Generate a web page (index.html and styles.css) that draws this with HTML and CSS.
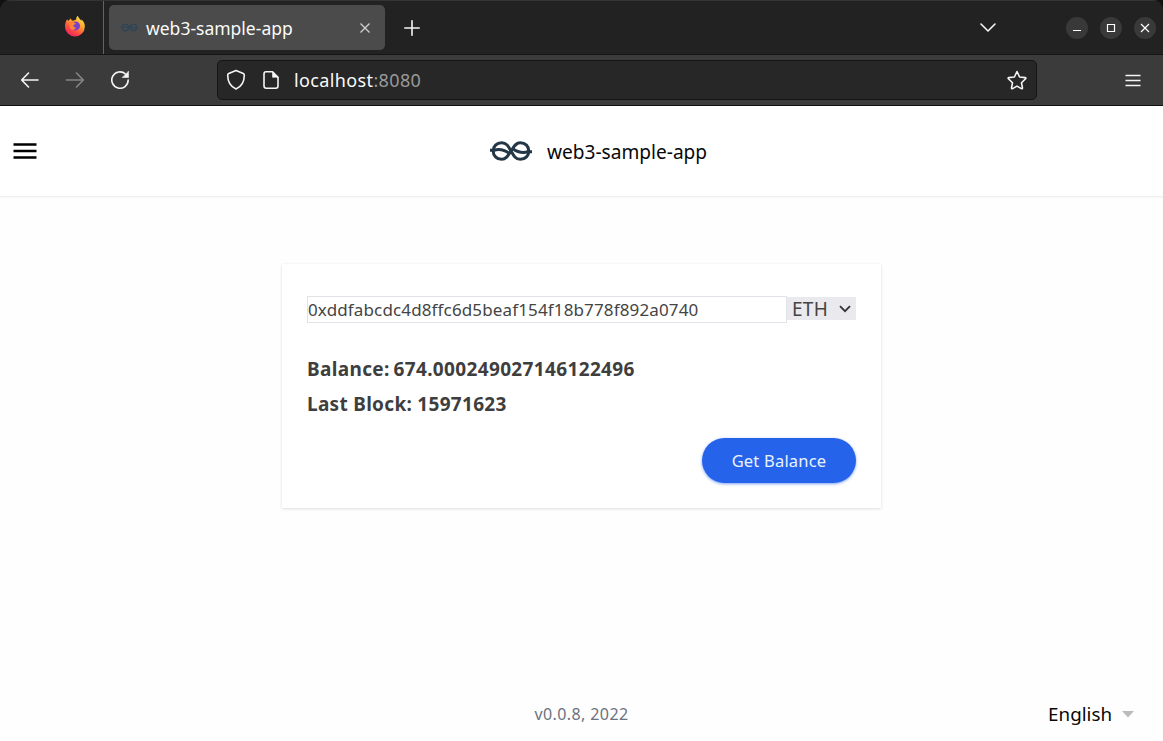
FILE: index.html
```html
<!DOCTYPE html>
<html lang="en">
<head>
<meta charset="utf-8">
<title>web3-sample-app</title>
<link rel="stylesheet" href="styles.css">
</head>
<body>
<svg class="defs" width="0" height="0">
  <symbol id="knot" viewBox="0 0 42 20">
    <g fill="none" stroke="currentColor" stroke-width="3">
      <path d="M21 10C18 14.500 16.500 18.300 11.700 18.300C6.500 18.300 3.200 14.500 3.200 10S6.500 1.700 11.700 1.700C16.500 1.700 18.500 5.500 21 10S25.500 18.300 30.300 18.300C35.500 18.300 38.800 14.500 38.800 10S35.500 1.700 30.300 1.700C25.500 1.700 24 5.500 21 10Z"/>
      <path d="M0 9.300H4C9 7.500 14 8.500 19.500 12.500M22.500 7.500C28 11.500 33 12.500 38 10.700H42"/>
    </g>
  </symbol>
</svg>
<div class="window">
  <div class="chrome">
    <div class="tabbar">
      <div class="pinned">
        <svg width="22" height="22" viewBox="0 0 22 22">
          <defs>
            <linearGradient id="flame" x1="0.85" y1="0" x2="0.25" y2="1"><stop offset="0" stop-color="#fff04a"/><stop offset=".38" stop-color="#ffa42d"/><stop offset=".68" stop-color="#ff5140"/><stop offset="1" stop-color="#ec1a65"/></linearGradient>
          </defs>
          <path fill="url(#flame)" d="M3.300 4.200C3.600 5 4 5.400 4.500 5.800L6.900 3.200C6.900 4.500 7.600 5.200 8.600 5.700C10 5.500 11 5.200 12.200 4.600C12 3 12.800 1.500 13.800.8C14.400 3 16.200 4 17.200 5.800L17.600 4.600C20 7 21 9 20.800 12A9.900 9.700 0 0 1 1 11.700C.9 8.700 1.700 6.200 3.300 4.200Z"/>
          <circle cx="11.500" cy="10.900" r="4.500" fill="#7542c9"/>
          <path fill="#ff8438" d="M4.500 7C7 5.700 9 6 10.200 7.500L11.800 8.200C11.500 9.300 10.500 9.600 9.500 10C9 11.800 10.500 12.800 12 12.800C10.500 15.500 7.500 16 6 12.500Z"/>
        </svg>
      </div>
      <div class="tab">
        <svg class="favicon" width="17" height="9"><use href="#knot"/></svg>
        <span class="tab-title">web3-sample-app</span>
        <svg class="tab-close" width="10" height="10" viewBox="0 0 10 10"><path d="M.5.5l9 9M9.500.5l-9 9"/></svg>
      </div>
      <svg class="icon plus" width="16" height="16" viewBox="0 0 16 16"><path d="M8 .8v14.400M.8 8h14.400"/></svg>
      <svg class="icon tabs-menu" width="16" height="10" viewBox="0 0 16 10"><path d="M1 1l7 7 7-7"/></svg>
      <div class="controls">
        <span class="control"><svg width="22" height="22"><path d="M7 13.500h8"/></svg></span>
        <span class="control"><svg width="22" height="22"><path d="M7.500 7.500h7v7h-7z"/></svg></span>
        <span class="control"><svg width="22" height="22"><path d="M7 7l8 8M15 7l-8 8"/></svg></span>
      </div>
    </div>
    <div class="toolbar">
      <div class="nav">
        <svg class="icon" width="20" height="18" viewBox="0 0 20 18"><path d="M18 9H2M8.500 2L1.700 9L8.500 16"/></svg>
        <svg class="icon disabled" width="20" height="18" viewBox="0 0 20 18"><path d="M1.500 9h16M11.500 2L18.300 9L11.500 16"/></svg>
        <svg class="icon" width="20" height="20" viewBox="0 0 20 20"><path d="M15.500 4A8.200 8.200 0 1 0 18.200 10"/><path class="solid" d="M18.500 1.500v6h-6z"/></svg>
      </div>
      <div class="urlbar">
        <svg class="icon" width="20" height="22" viewBox="0 0 20 22"><path d="M10 1.500L17.300 4.500Q18.300 5 18.300 6.200C18.300 13 15.500 17.500 10 20C4.500 17.500 1.700 13 1.700 6.200Q1.700 5 2.700 4.500Z"/></svg>
        <svg class="icon page" width="16" height="18" viewBox="0 0 16 18"><path d="M3 .8h6.500L15 6.300V15Q15 17.200 12.800 17.200H3.200Q1 17.200 1 15V3Q1 .8 3 .8Z"/><path class="solid" d="M9.500.8V6.300H15z"/></svg>
        <span class="url">localhost<span class="port">:8080</span></span>
        <svg class="icon star" width="22" height="21" viewBox="0 0 22 21"><path d="M11 1.500L13.600 7L19.300 7.600Q20.300 8 19.600 8.800L15.500 12.800L16.500 18Q16.400 19.100 15.400 18.600L11 16.100L6.600 18.600Q5.600 19.100 5.500 18L6.500 12.800L2.400 8.800Q1.700 8 2.700 7.600L8.400 7Z"/></svg>
      </div>
      <svg class="icon app-menu" width="16" height="13" viewBox="0 0 16 13"><path d="M.5 1.500h15M.5 6.500h15M.5 11.500h15"/></svg>
    </div>
  </div>
  <header class="header">
    <svg class="burger" width="24" height="16"><path d="M.5 1.500h23M.5 8h23M.5 14.500h23"/></svg>
    <div class="brand">
      <svg width="42" height="20"><use href="#knot"/></svg>
      <span>web3-sample-app</span>
    </div>
  </header>
  <main class="main">
    <section class="card">
      <div class="row">
        <div class="address">0xddfabcdc4d8ffc6d5beaf154f18b778f892a0740</div>
        <div class="select"><span>ETH</span><svg width="12" height="8" viewBox="0 0 12 8"><path d="M1 1.200l5 5 5-5"/></svg></div>
      </div>
      <div class="results">
        <div class="balance">Balance: 674.000249027146122496</div>
        <div>Last Block: 15971623</div>
      </div>
      <button class="button">Get Balance</button>
    </section>
  </main>
  <footer class="footer">
    <span class="version">v0.0.8, 2022</span>
    <div class="language"><span>English</span><svg width="12" height="7"><path d="M0 0h12L6 6.500z"/></svg></div>
  </footer>
</div>
</body>
</html>
```

FILE: styles.css
```css
* { box-sizing: border-box; }
body { margin: 0; background: #fefefe; font-family: "Noto Sans", sans-serif; }
svg { display: block; flex: none; }
.defs { position: absolute; }
.window { width: 1163px; height: 741px; display: flex; flex-direction: column; overflow: hidden; white-space: nowrap; }

.chrome { height: 106px; background: #222; box-shadow: 0 -10px 0 10px #111; border-radius: 10px 10px 0 0; overflow: hidden; border-bottom: 1px solid #111; flex: none; }
.tabbar { height: 55px; background: #222; border-top: 1px solid #343434; border-bottom: 1px solid #151515; display: flex; align-items: center; }
.pinned { width: 104px; height: 100%; border-right: 1px solid #636363; padding: 14px 0 0 64px; }
.tab { width: 276px; height: 45px; margin-left: 5px; padding: 0 15px 0 12px; border-radius: 5px; background: #4b4b4b; display: flex; align-items: center; }
.favicon { color: #2c4558; }
.tab-title { margin-left: 8px; font-size: 17.500px; color: #fafafa; }
.tab-close { margin-left: auto; stroke: #d0d0d0; stroke-width: 1.300; }
.icon { fill: none; stroke: #f5f5f5; stroke-width: 1.600; stroke-linejoin: round; stroke-linecap: round; }
.icon .solid { fill: #f5f5f5; stroke-width: .6; }
.plus { margin-left: 18.500px; }
.tabs-menu { margin-left: auto; margin-right: 70px; }
.controls { display: flex; gap: 12px; padding-right: 7px; }
.control { width: 22px; height: 22px; border-radius: 50%; background: #393939; }
.control svg { fill: none; stroke: #fff; stroke-width: 1.200; }

.toolbar { height: 50px; background: #3b3b3b; display: flex; align-items: center; padding: 0 22px 0 20px; }
.nav { width: 197px; display: flex; align-items: center; gap: 25px; }
.disabled { opacity: .4; }
.urlbar { width: 820px; height: 40px; border: 1px solid #151515; border-radius: 5px; background: #272727; display: flex; align-items: center; padding: 0 8px; }
.page { margin-left: 17px; }
.url { margin-left: 15px; font-size: 18px; letter-spacing: .37px; color: #fafafa; }
.port { color: #999; }
.star { margin-left: auto; }
.app-menu { margin-left: auto; stroke-linecap: butt; }

.header { height: 91px; flex: none; display: flex; align-items: center; background: #fff; border-bottom: 1px solid #f0f0f0; box-shadow: 0 1px 2px #0000000a; padding-left: 13px; }
.burger { stroke: #000; stroke-width: 2.600; }
.brand { margin-left: 453px; display: flex; align-items: center; gap: 15px; color: #243746; }
.brand span { padding-top: 2px; font-size: 19.100px; color: #080808; }

.main { flex: 1; display: flex; justify-content: center; align-items: flex-start; padding-top: 67px; }
.card { width: 599px; height: 244px; padding: 32px 25px 25px; background: #fff; box-shadow: 0 1px 3px #0000001f, 0 0 2px #00000008; display: flex; flex-direction: column; }
.row { display: flex; align-items: flex-start; color: #444; }
.address { width: 480px; height: 27px; border: 1px solid #e1e3e8; font-size: 17px; line-height: 25px; letter-spacing: .14px; }
.select { width: 69px; height: 23px; margin-top: 1px; padding: 0 5px; background: #e9e9ee; display: flex; align-items: center; justify-content: space-between; font-size: 19px; letter-spacing: .3px; line-height: 23px; }
.select span { padding-top: 2px; }
.select svg { fill: none; stroke: #333; stroke-width: 1.800; }
.results { margin-top: 29px; font-size: 19px; line-height: 35px; letter-spacing: .3px; font-weight: 700; color: #3e3e3e; }
.balance { word-spacing: -1.500px; letter-spacing: .35px; }
.button { width: 154px; height: 45px; margin-top: auto; align-self: flex-end; border: 0; border-radius: 23px; background: #2563eb; color: #eaf2ff; font: 16.500px "Noto Sans", sans-serif; letter-spacing: .2px; box-shadow: 0 1px 3px #2563eb99; }

.footer { height: 55px; display: grid; grid-template-columns: 1fr auto 1fr; align-items: center; padding-right: 29px; }
.version { grid-column: 2; margin-left: 29px; font-size: 16px; letter-spacing: .4px; color: #6b7280; }
.language { justify-self: end; display: flex; align-items: center; gap: 10px; font-size: 18.800px; color: #080808; }
.language svg { fill: #bcbcbc; margin-top: 2px; }
```
